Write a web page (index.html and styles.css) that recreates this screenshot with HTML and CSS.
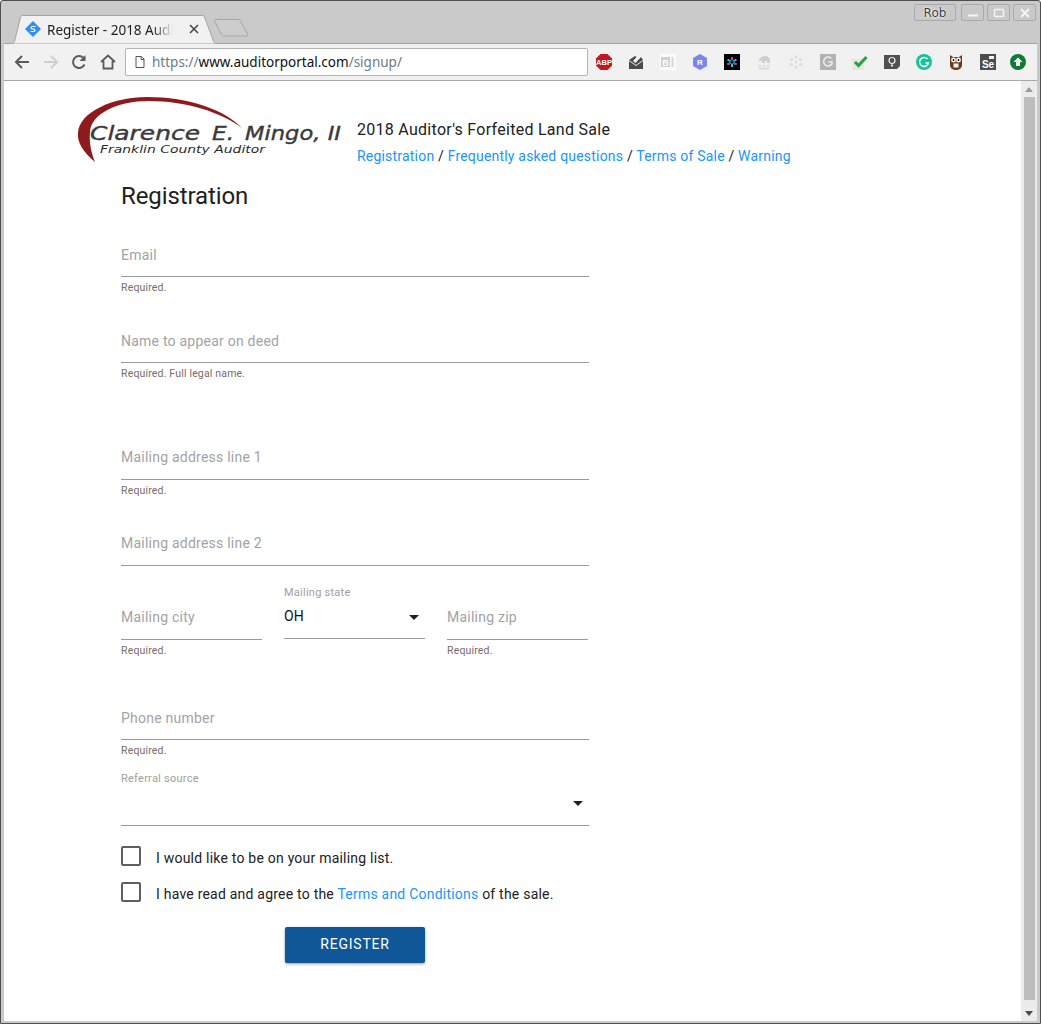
FILE: index.html
```html
<!DOCTYPE html>
<html lang="en">

<head>
    <meta charset="utf-8">
    <title>Register - 2018 Auditor's Forfeited Land Sale</title>
    <link rel="stylesheet" href="styles.css">
</head>

<body>
    <div class="window">
        <div class="titlebar">
            <div class="tab">
                <svg class="tab-shape" width="207" height="30" viewBox="0 0 207 30">
                    <path d="M0 29.5h1c1 0 2-1 2.5-2L9.5 3c.5-1 1-1.500 2.500-1.500h179c1.500 0 2 .5 2.500 1.500l9 24c.5 1.500 1.500 2.500 3 2.500h1" fill="#f1f1f1" stroke="#a3a3a3"/>
                </svg>
                <svg class="tab-icon" width="16" height="16" viewBox="0 0 16 16">
                    <path d="M8 0l8 8-8 8-8-8z" fill="#2f8ff0"/>
                    <path d="M10.5 5.5H7a1.300 1.300 0 0 0 0 2.500h2a1.300 1.300 0 0 1 0 2.500H5.500" fill="none" stroke="#fff" stroke-width="1.200"/>
                </svg>
                <span class="tab-title">Register - 2018 Audi</span>
                <svg class="tab-close" width="10" height="10" viewBox="0 0 10 10">
                    <path d="M1 1l8 8M9 1l-8 8" stroke="#444" stroke-width="1.500"/>
                </svg>
            </div>
            <svg class="new-tab" width="36" height="18" viewBox="0 0 36 18">
                <path d="M1 .5h23c1 0 2 .5 2.500 1.500l7 13c.5 1 0 2-1 2H10c-1 0-2-.5-2.500-1.500L.5 2C0 1 0 .5 1 .5z" fill="#cdcdcd" stroke="#a5a5a5"/>
            </svg>
            <div class="win-controls">
                <span class="profile">Rob</span>
                <span class="win-btn">
                    <svg width="12" height="12" viewBox="0 0 12 12"><path d="M1 8.500h10" stroke="#f4f4f4" stroke-width="2"/></svg>
                </span>
                <span class="win-btn">
                    <svg width="12" height="12" viewBox="0 0 12 12"><rect x="1.500" y="2.500" width="9" height="7" rx="1" fill="none" stroke="#f4f4f4" stroke-width="1.500"/></svg>
                </span>
                <span class="win-btn">
                    <svg width="12" height="12" viewBox="0 0 12 12"><path d="M2 2l8 8M10 2l-8 8" stroke="#f4f4f4" stroke-width="1.800"/></svg>
                </span>
            </div>
        </div>

        <div class="toolbar">
            <svg class="nav-icon" width="16" height="16" viewBox="0 0 16 16"><path d="M15 8H2M8 2L2 8l6 6" fill="none" stroke="#5a5a5a" stroke-width="2"/></svg>
            <svg class="nav-icon" width="16" height="16" viewBox="0 0 16 16"><path d="M1 8h13M8 2l6 6-6 6" fill="none" stroke="#cfcfcf" stroke-width="2"/></svg>
            <svg class="nav-icon" width="16" height="16" viewBox="0 0 16 16"><path d="M13.5 10.500A6 6 0 1 1 12.300 3.800" fill="none" stroke="#5a5a5a" stroke-width="2"/><path d="M14.500 1v6h-6z" fill="#5a5a5a"/></svg>
            <svg class="nav-icon" width="16" height="16" viewBox="0 0 16 16"><path d="M1 8l7-6.500L15 8M3.500 7v7.500h9V7" fill="none" stroke="#5a5a5a" stroke-width="1.800"/></svg>
            <div class="omnibox">
                <svg width="10" height="12" viewBox="0 0 10 12"><path d="M1 .5h5.500L9 3v8.500H1z" fill="#fff" stroke="#555"/><path d="M6 .5V3.500h3" fill="none" stroke="#555"/></svg>
                <span class="url"><span class="url-dim">https://</span>www.auditorportal.com<span class="url-dim">/signup/</span></span>
            </div>
            <div class="extensions">
                <svg width="18" height="18" viewBox="0 0 18 18"><path d="M5.500 1h7L17 5.500v7L12.500 17h-7L1 12.500v-7z" fill="#c4161c"/><text x="9" y="11.500" class="ext-text abp">ABP</text></svg>
                <svg width="16" height="16" viewBox="0 0 16 16"><path d="M1 7l7 5 7-5v8H1z" fill="#4a4a4a"/><path d="M1 6l6-4 1.500 1L5 7l2.500 2L13 3l2 3-7 5z" fill="#4a4a4a"/></svg>
                <svg width="16" height="16" viewBox="0 0 16 16"><rect width="16" height="16" fill="#fafafa"/><rect x="1" y="3" width="9" height="10" fill="#cfcfcf"/><rect x="11.500" y="3" width="2" height="10" fill="#d5d5d5"/><text x="5.500" y="11.500" class="ext-text bi">B</text></svg>
                <svg width="16" height="18" viewBox="0 0 16 18"><path d="M8 1l7 4v8l-7 4-7-4V5z" fill="#7a86f0"/><text x="8" y="12" class="ext-text hex">R</text></svg>
                <svg width="16" height="16" viewBox="0 0 16 16"><rect width="16" height="16" fill="#000"/><path d="M8 3v10M3.500 5.500l9 5M12.500 5.500l-9 5" stroke="#21c7e8" stroke-width="2"/><path d="M8 3v3M3.500 10.500L6 9M12.500 10.500L10 9" stroke="#ef2a8c" stroke-width="2"/><circle cx="8" cy="8" r="1.700" fill="#000"/></svg>
                <svg width="16" height="16" viewBox="0 0 16 16"><path d="M3 7c0-3 3-5 6-5s5 2 5 5v2h-3V7H9v2H6V7z" fill="#cfcfcf"/><path d="M2 12h3M6.500 12h3M11 12h3M3 14.500h10" stroke="#d8d8d8" stroke-width="1.500"/></svg>
                <svg width="14" height="14" viewBox="0 0 14 14"><g fill="#dcdcdc"><circle cx="7" cy="7" r="1.500"/><circle cx="7" cy="2" r="1.600"/><circle cx="7" cy="12" r="1.600"/><circle cx="2.500" cy="4.500" r="1.600"/><circle cx="11.500" cy="4.500" r="1.600"/><circle cx="2.500" cy="9.500" r="1.600"/><circle cx="11.500" cy="9.500" r="1.600"/></g></svg>
                <svg width="16" height="16" viewBox="0 0 16 16"><rect width="16" height="16" fill="#b3b3b3"/><path d="M11.500 4.500A4.500 4.500 0 1 0 12 10V8H8.500" fill="none" stroke="#f1f1f1" stroke-width="1.400"/></svg>
                <svg width="16" height="16" viewBox="0 0 16 16"><rect x="0" y="5" width="12" height="11" fill="#e7e6d8"/><path d="M3 8l3.500 3.500L14.500 3" fill="none" stroke="#25a244" stroke-width="3"/></svg>
                <svg width="16" height="16" viewBox="0 0 16 16"><path d="M0 1h16v11l-3 3H0z" fill="#505050"/><circle cx="8" cy="6.500" r="3" fill="none" stroke="#f1f1f1" stroke-width="1.200"/><path d="M7 10.500h2v2H7z" fill="#f1f1f1"/></svg>
                <svg width="16" height="16" viewBox="0 0 16 16"><circle cx="8" cy="8" r="8" fill="#15c39a"/><path d="M11.500 5a4.500 4.500 0 1 0 1 4H9.500" fill="none" stroke="#fff" stroke-width="1.500"/></svg>
                <svg width="16" height="18" viewBox="0 0 16 18"><path d="M2 2l3 2h6l3-2v10c0 3-3 5-6 5s-6-2-6-5z" fill="#6d3d20"/><circle cx="5.500" cy="7" r="2.400" fill="#fff"/><circle cx="10.500" cy="7" r="2.400" fill="#fff"/><circle cx="5.500" cy="7" r=".9" fill="#000"/><circle cx="10.500" cy="7" r=".9" fill="#000"/><path d="M5.500 10.500h5v4h-5z" fill="#f3f0e6"/><path d="M8 8l-1 1.500h2z" fill="#e8a020"/></svg>
                <svg width="16" height="16" viewBox="0 0 16 16"><rect width="16" height="16" fill="#4d4d4d"/><rect x="9" y="2" width="5" height="3" fill="#f1f1f1"/><text x="8" y="14" class="ext-text se">Se</text></svg>
                <svg width="16" height="16" viewBox="0 0 16 16"><circle cx="8" cy="8" r="8" fill="#0f7a36"/><path d="M8 3.500L12.500 8H10v4H6V8H3.500z" fill="#fff"/></svg>
            </div>
        </div>

        <div class="viewport">
            <main class="page">
                <header class="site-header">
                    <svg class="logo" width="270" height="70" viewBox="0 0 270 70">
                        <path d="M18 66C6 56 0 46 1 37 2 16 36 1 70 1c42 0 78 13 95 31C144 16 108 5 72 5 40 5 14 18 13 36c-1 10 1 20 5 30z" fill="#8e1a1e"/>
                        <text y="44" class="logo-name"><tspan x="13" textLength="110" lengthAdjust="spacingAndGlyphs">Clarence</tspan><tspan x="135" textLength="22" lengthAdjust="spacingAndGlyphs">E.</tspan><tspan x="168" textLength="96" lengthAdjust="spacingAndGlyphs">Mingo, II</tspan></text>
                        <text x="23" y="57" class="logo-sub" textLength="165" lengthAdjust="spacingAndGlyphs">Franklin County Auditor</text>
                    </svg>
                    <div class="site-title">
                        <div class="sale-name">2018 Auditor's Forfeited Land Sale</div>
                        <nav class="site-nav">
                            <a href="#">Registration</a> / <a href="#">Frequently asked questions</a> / <a href="#">Terms of Sale</a> / <a href="#">Warning</a>
                        </nav>
                    </div>
                </header>

                <form class="signup">
                    <h1>Registration</h1>

                    <div class="field">
                        <div class="control"><span class="placeholder">Email</span></div>
                        <div class="hint">Required.</div>
                    </div>
                    <div class="field field-tall">
                        <div class="control"><span class="placeholder">Name to appear on deed</span></div>
                        <div class="hint">Required. Full legal name.</div>
                    </div>
                    <div class="field">
                        <div class="control control-low"><span class="placeholder">Mailing address line 1</span></div>
                        <div class="hint">Required.</div>
                    </div>
                    <div class="field field-nohint">
                        <div class="control control-low"><span class="placeholder">Mailing address line 2</span></div>
                    </div>

                    <div class="field-row">
                        <div class="field">
                            <div class="control control-low"><span class="placeholder">Mailing city</span></div>
                            <div class="hint">Required.</div>
                        </div>
                        <div class="field field-select">
                            <label class="float-label">Mailing state</label>
                            <div class="control"><span class="value">OH</span><span class="arrow"></span></div>
                        </div>
                        <div class="field">
                            <div class="control control-low"><span class="placeholder">Mailing zip</span></div>
                            <div class="hint">Required.</div>
                        </div>
                    </div>

                    <div class="field field-phone">
                        <div class="control"><span class="placeholder">Phone number</span></div>
                        <div class="hint">Required.</div>
                    </div>
                    <div class="field field-referral">
                        <label class="float-label">Referral source</label>
                        <div class="control"><span class="value"></span><span class="arrow"></span></div>
                    </div>

                    <label class="check"><span class="box"></span><span>I would like to be on your mailing list.</span></label>
                    <label class="check"><span class="box"></span><span>I have read and agree to the <a href="#">Terms and Conditions</a> of the sale.</span></label>

                    <div class="actions">
                        <button type="button" class="register">REGISTER</button>
                    </div>
                </form>
            </main>

            <div class="scrollbar">
                <span class="scroll-up"></span>
                <span class="scroll-thumb"></span>
                <span class="scroll-down"></span>
            </div>
        </div>
    </div>
</body>

</html>
```

FILE: styles.css
```css
* {
    box-sizing: border-box;
}

html,
body {
    margin: 0;
    padding: 0;
    background: #fff;
}

body {
    font-family: Roboto, "Liberation Sans", sans-serif;
    color: #212121;
}

a {
    color: #2196f3;
    text-decoration: none;
}

/* browser frame */
.window {
    display: flex;
    flex-direction: column;
    width: 1041px;
    height: 1024px;
    overflow: hidden;
    padding-bottom: 2px;
    background: #cacaca;
    border: 1px solid #4f4f4f;
    border-radius: 3px 3px 0 0;
}

.titlebar {
    display: flex;
    align-items: flex-end;
    height: 42px;
    flex-shrink: 0;
    padding-left: 10px;
}

.tab {
    position: relative;
    display: flex;
    align-items: center;
    width: 207px;
    height: 30px;
    padding: 0 0 0 14px;
    margin-bottom: -1px;
    z-index: 1;
}

.tab-shape {
    position: absolute;
    left: 0;
    top: 0;
}

.tab-icon,
.tab-title,
.tab-close {
    position: relative;
}

.tab-icon {
    flex-shrink: 0;
}

.tab-title {
    width: 126px;
    margin: 1px 0 0 6px;
    font-family: "Noto Sans", sans-serif;
    font-size: 13.5px;
    line-height: 18px;
    color: #222;
    white-space: nowrap;
    -webkit-mask-image: linear-gradient(to right, #000 84%, transparent);
    mask-image: linear-gradient(to right, #000 84%, transparent);
}

.tab-close {
    flex-shrink: 0;
    margin-left: 16px;
}

.new-tab {
    margin: 0 0 6px -4px;
}

.win-controls {
    display: flex;
    gap: 3px;
    margin-left: auto;
    align-self: flex-start;
    padding: 3px 4px 0 0;
}

.profile,
.win-btn {
    display: flex;
    align-items: center;
    justify-content: center;
    height: 17px;
    border: 1px solid #a9a9a9;
    border-radius: 2px;
    background: #c9c9c9;
}

.profile {
    width: 42px;
    margin-right: 2px;
    font-family: "DejaVu Sans", sans-serif;
    font-size: 12px;
    color: #3c3c3c;
    text-shadow: 0 0 2px #fff, 0 0 2px #fff;
}

.win-btn {
    width: 23px;
}

.toolbar {
    display: flex;
    align-items: center;
    height: 38px;
    flex-shrink: 0;
    margin: 0 3px;
    padding-left: 10px;
    background: #f1f1f1;
    border-top: 1px solid #a3a3a3;
    border-bottom: 1px solid #a8a8a8;
}

.nav-icon {
    flex-shrink: 0;
    margin-right: 12.5px;
}

.omnibox {
    display: flex;
    align-items: center;
    gap: 7px;
    flex-shrink: 0;
    width: 463px;
    height: 28px;
    padding-left: 9px;
    margin-left: -3px;
    background: #fff;
    border: 1px solid #b4b4b4;
    border-radius: 2px;
}

.url {
    font-family: "Noto Sans", sans-serif;
    font-size: 13.5px;
    color: #111;
    white-space: nowrap;
}

.url-dim {
    color: #6e7b87;
}

.extensions {
    display: grid;
    grid-template-columns: repeat(14, 32px);
    align-items: center;
    justify-items: center;
}

.extensions svg:last-child {
    margin-right: 4px;
}

.ext-text {
    font-family: "Liberation Sans", sans-serif;
    font-weight: bold;
    text-anchor: middle;
    fill: #fff;
}

.abp {
    font-size: 7.5px;
}

.bi {
    font-size: 9px;
}

.hex {
    font-size: 8px;
}

.se {
    font-size: 10px;
}

.viewport {
    flex: 1;
    display: flex;
    min-height: 0;
    margin: 0 3px;
    background: #fff;
}

/* page */
.page {
    flex: 1;
    min-width: 0;
    padding: 15px 0 0 73px;
}

.site-header {
    display: flex;
    align-items: flex-start;
    height: 70px;
}

.logo {
    flex-shrink: 0;
}

.logo-name {
    font-family: "DejaVu Sans", sans-serif;
    font-style: oblique;
    font-size: 20px;
    fill: #3a3a3c;
    stroke: #3a3a3c;
    stroke-width: .4px;
}

.logo-sub {
    font-family: "DejaVu Sans", sans-serif;
    font-style: oblique;
    font-size: 11px;
    fill: #2a2a2a;
}

.site-title {
    margin: 22px 0 0 10px;
}

.sale-name {
    font-size: 16px;
    line-height: 24px;
    letter-spacing: .28px;
}

.site-nav {
    margin-top: 4px;
    font-size: 14px;
    line-height: 20px;
    letter-spacing: .2px;
}

.signup {
    width: 468px;
    margin-left: 44px;
}

h1 {
    margin: 14px 0 23px;
    font-size: 24px;
    font-weight: 400;
    line-height: 32px;
    letter-spacing: -.1px;
}

.field {
    height: 86px;
}

.field-tall {
    height: 117px;
}

.field-nohint {
    height: 56px;
}

.control {
    display: flex;
    align-items: center;
    height: 42px;
    padding-bottom: 2px;
    border-bottom: 1px solid #9a9a9a;
    font-size: 14px;
    letter-spacing: .23px;
}

.control-low {
    padding-bottom: 4px;
}

.placeholder {
    color: #a3a3a3;
}

.value {
    flex: 1;
    color: #111;
    letter-spacing: 0;
}

.arrow {
    width: 0;
    height: 0;
    margin-right: 6px;
    border-left: 5px solid transparent;
    border-right: 5px solid transparent;
    border-top: 5px solid #212121;
}

.hint {
    margin-top: 5px;
    font-size: 10.5px;
    line-height: 12px;
    letter-spacing: .17px;
    color: #7b6a6a;
}

.float-label {
    display: block;
    font-size: 11px;
    line-height: 13px;
    letter-spacing: .25px;
    color: #a0a0a0;
}

.field-row {
    display: flex;
    gap: 22px;
    width: 467px;
    height: 118px;
}

.field-row .field {
    flex: 1;
    padding-top: 18px;
}

.field-row .field-select {
    padding-top: 6px;
}

.field-select .control {
    height: 40px;
    padding-bottom: 6px;
}

.field-select .arrow {
    margin-top: 4px;
}

.field-phone {
    height: 74px;
}

.field-referral {
    height: 68px;
}

.field-referral .control {
    height: 41px;
    padding-bottom: 3px;
}

.check {
    display: flex;
    align-items: center;
    gap: 15px;
    height: 36px;
    font-size: 14px;
    letter-spacing: .22px;
}

.box {
    flex-shrink: 0;
    width: 20px;
    height: 20px;
    margin-top: -4px;
    border: 2px solid #5f5f5f;
    border-radius: 2px;
}

.actions {
    display: flex;
    justify-content: center;
    margin-top: 15px;
}

.register {
    width: 140px;
    height: 36px;
    padding: 0 0 2px;
    font-family: inherit;
    font-size: 14px;
    letter-spacing: .8px;
    color: #fff;
    background: #0f5796;
    border: 0;
    border-radius: 2px;
    box-shadow: 0 1px 3px rgba(0, 0, 0, .4);
}

/* scrollbar */
.scrollbar {
    display: flex;
    flex-direction: column;
    align-items: center;
    width: 16px;
    flex-shrink: 0;
    background: #ececec;
    padding: 6px 0 5px;
}

.scroll-up,
.scroll-down {
    flex-shrink: 0;
    width: 0;
    height: 0;
    border-left: 4px solid transparent;
    border-right: 4px solid transparent;
}

.scroll-up {
    border-bottom: 5px solid #9b9b9b;
}

.scroll-down {
    border-top: 5px solid #4a4a4a;
}

.scroll-thumb {
    flex: 1;
    width: 11px;
    margin: 5px 0 11px;
    background: #bdbdbd;
}
```
